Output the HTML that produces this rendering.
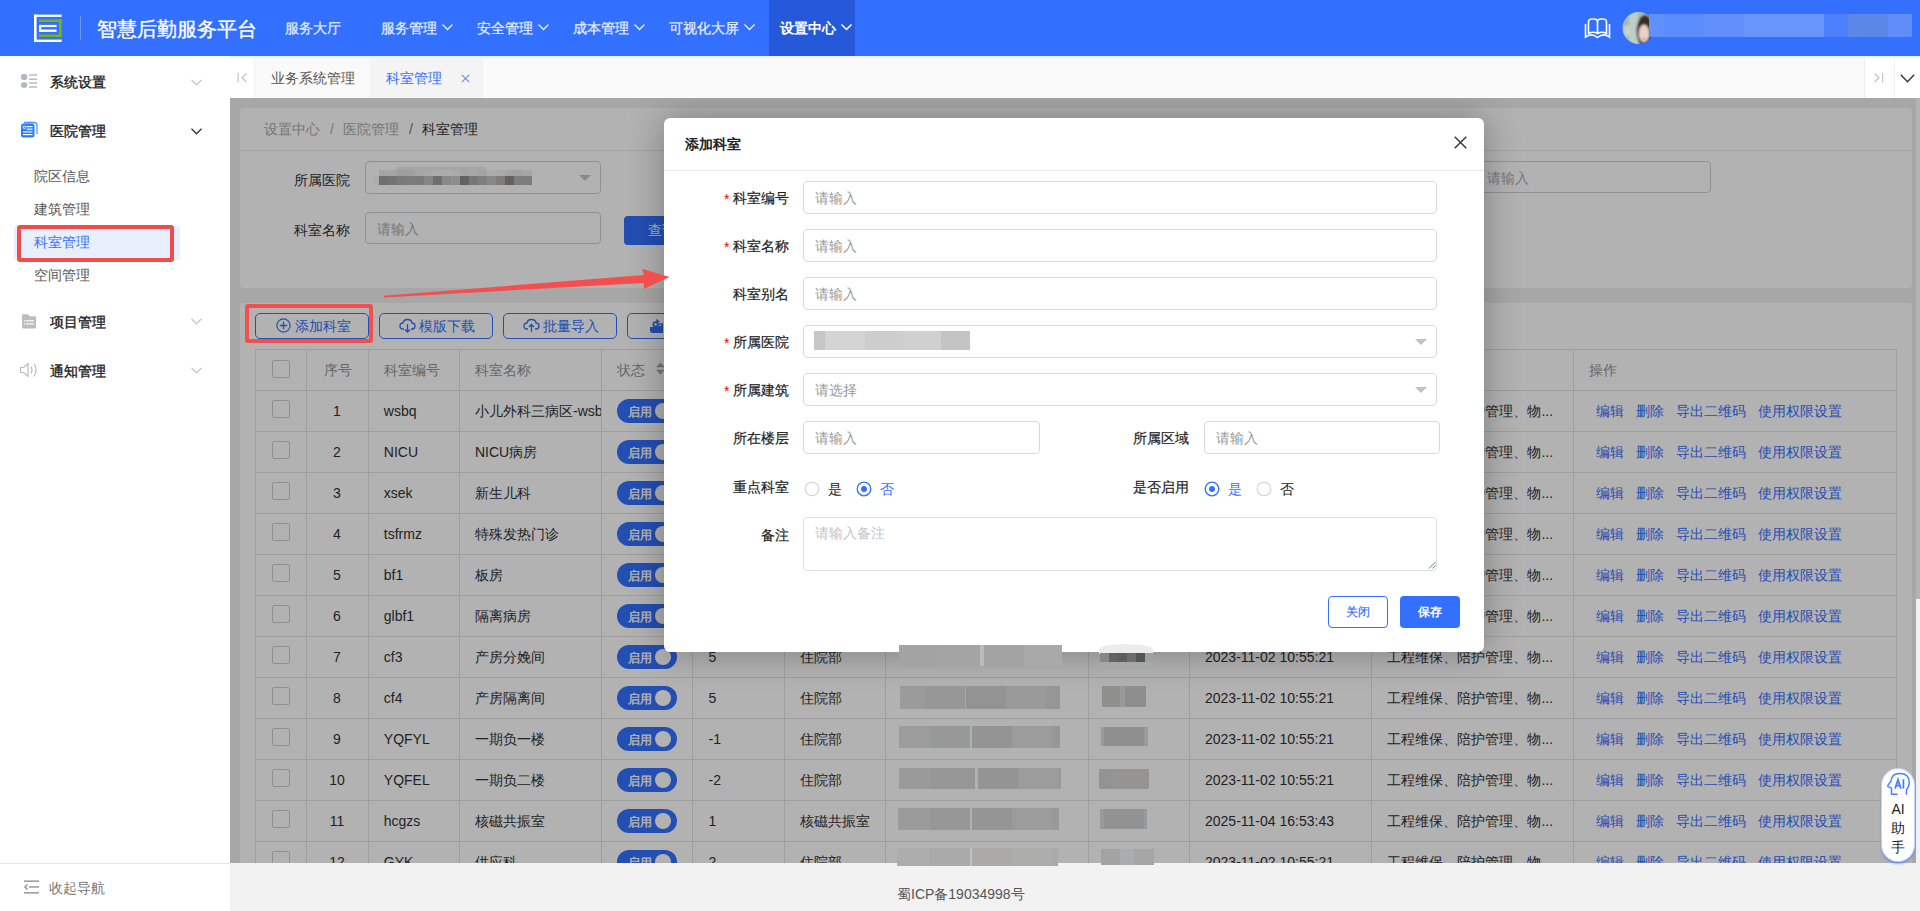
<!DOCTYPE html>
<html><head><meta charset="utf-8">
<style>
*{box-sizing:border-box;margin:0;padding:0}
html,body{width:1920px;height:911px;overflow:hidden;font-family:"Liberation Sans",sans-serif;font-size:14px;color:#333;background:#fff}
.abs{position:absolute}
.t{position:absolute;white-space:nowrap;line-height:1}
/* header */
#hdr{position:absolute;left:0;top:0;width:1920px;height:56px;background:#3370ff;z-index:5}
.nav{position:absolute;top:20px;font-size:14px;font-weight:400;-webkit-text-stroke:0.25px #e6eeff;color:#e6eeff;line-height:16px;white-space:nowrap}
.chev{position:absolute;width:11px;height:7px}
/* sidebar */
#side{position:absolute;left:0;top:56px;width:230px;height:855px;background:#fff}
.mi{position:absolute;left:50px;font-size:14px;font-weight:400;-webkit-text-stroke:0.35px #222;color:#222;line-height:16px}
.si{position:absolute;left:34px;font-size:14px;color:#555;line-height:16px}
/* tabs */
#tabs{position:absolute;left:230px;top:56px;width:1690px;height:42px;background:#fafafa;border-top:2px solid #f0f0f0;z-index:5}
/* content */
#content{position:absolute;left:230px;top:98px;width:1690px;height:765px;background:#f0f0f0;overflow:hidden}
#footer{position:absolute;left:230px;top:863px;width:1690px;height:48px;background:#f2f2f2}
#overlay{position:absolute;left:230px;top:98px;width:1690px;height:765px;background:rgba(0,0,0,0.3)}
/* modal */
#modal{position:absolute;left:664px;top:118px;width:820px;height:534px;background:#fff;border-radius:6px;box-shadow:0 0 36px rgba(0,0,0,0.3)}
.lbl{position:absolute;font-size:14px;color:#222;line-height:16px;white-space:nowrap;text-align:right}
.req{color:#f33;margin-right:4px}
.inp{position:absolute;height:32px;border:1px solid #d4d4d4;border-radius:4px;background:#fff}
.ph{position:absolute;left:11px;top:8px;font-size:14px;line-height:16px;color:#999;white-space:nowrap}
.tri{position:absolute;width:0;height:0;border-left:6px solid transparent;border-right:6px solid transparent;border-top:6px solid #c0c0c0}
</style></head><body>

<!-- HEADER -->
<div id="hdr">
  <svg class="abs" style="left:0;top:0" width="90" height="56">
    <rect x="34" y="14.6" width="27.6" height="2.3" fill="#fff"/>
    <rect x="34" y="14.6" width="2.6" height="27.4" fill="#fff"/>
    <rect x="34" y="39.6" width="27.6" height="2.4" fill="#fff"/>
    <rect x="39" y="19.4" width="22.6" height="2.6" fill="#7ab800"/>
    <rect x="59" y="19.4" width="2.6" height="17.6" fill="#7ab800"/>
    <rect x="39" y="34.6" width="22.6" height="2.4" fill="#7ab800"/>
    <rect x="39" y="24.9" width="17.6" height="2.2" fill="#fff"/>
    <rect x="39" y="29.5" width="17.6" height="2.4" fill="#fff"/>
    <rect x="39" y="24.9" width="2.2" height="7" fill="#fff"/>
    <rect x="80" y="16" width="1" height="24" fill="rgba(255,255,255,0.3)"/>
  </svg>
  <div class="t" style="left:97px;top:18px;font-size:20px;line-height:22px;color:#fff;-webkit-text-stroke:0.35px #fff">智慧后勤服务平台</div>
  <div class="nav" style="left:285px">服务大厅</div>
  <div class="nav" style="left:381px">服务管理</div>
  <div class="nav" style="left:477px">安全管理</div>
  <div class="nav" style="left:573px">成本管理</div>
  <div class="nav" style="left:669px">可视化大屏</div>
  <div class="abs" style="left:769px;top:0;width:86px;height:56px;background:#2659d9"></div>
  <div class="nav" style="left:780px;color:#fff;font-weight:bold;-webkit-text-stroke:0">设置中心</div>
  <svg class="chev" style="left:442px;top:24px" viewBox="0 0 11 7"><path d="M0.5 0.5 L5.5 5.5 L10.5 0.5" fill="none" stroke="#e6eeff" stroke-width="1.3"/></svg>
  <svg class="chev" style="left:538px;top:24px" viewBox="0 0 11 7"><path d="M0.5 0.5 L5.5 5.5 L10.5 0.5" fill="none" stroke="#e6eeff" stroke-width="1.3"/></svg>
  <svg class="chev" style="left:634px;top:24px" viewBox="0 0 11 7"><path d="M0.5 0.5 L5.5 5.5 L10.5 0.5" fill="none" stroke="#e6eeff" stroke-width="1.3"/></svg>
  <svg class="chev" style="left:744px;top:24px" viewBox="0 0 11 7"><path d="M0.5 0.5 L5.5 5.5 L10.5 0.5" fill="none" stroke="#e6eeff" stroke-width="1.3"/></svg>
  <svg class="chev" style="left:841px;top:24px" viewBox="0 0 11 7"><path d="M0.5 0.5 L5.5 5.5 L10.5 0.5" fill="none" stroke="#fff" stroke-width="1.5"/></svg>
  <!-- book icon -->
  <svg class="abs" style="left:1584px;top:18px" width="27" height="21" viewBox="0 0 27 21">
    <path d="M4.5 16 V4 Q4.5 1 8 1 H10 Q13.5 1 13.5 4 V16 M13.5 4 Q13.5 1 17 1 H19 Q22.5 1 22.5 4 V16 M4.5 15.5 Q9 13 13.5 15.5 Q18 13 22.5 15.5" fill="none" stroke="#fff" stroke-width="1.6"/>
    <path d="M1.5 6 V19 Q7.5 14.5 13.5 19.5 Q19.5 14.5 25.5 19 V6" fill="none" stroke="#fff" stroke-width="1.6"/>
  </svg>
  <!-- avatar -->
  <svg class="abs" style="left:1622px;top:12px" width="32" height="32" viewBox="0 0 32 32">
    <defs><clipPath id="av"><circle cx="16.5" cy="16" r="16"/></clipPath><filter id="bl"><feGaussianBlur stdDeviation="0.8"/></filter></defs>
    <g clip-path="url(#av)"><g filter="url(#bl)">
      <rect x="-2" y="-2" width="36" height="36" fill="#a3b9b1"/>
      <rect x="7" y="-2" width="9" height="36" fill="#bfcec8"/>
      <rect x="2" y="14" width="6" height="10" fill="#c8d4c8"/>
      <ellipse cx="23" cy="19" rx="8.5" ry="16" fill="#3e2c22"/>
      <ellipse cx="22" cy="21.5" rx="5.3" ry="9" fill="#e9d3c5"/>
      <ellipse cx="22" cy="27" rx="2" ry="1" fill="#d08a80"/>
    </g></g>
  </svg>
  <div class="abs" style="left:1649px;top:14px;width:263px;height:23px;background:linear-gradient(90deg,#6090fc 0,#6090fc 15px,#5b8cfb 15px,#5b8cfb 55px,#6290fb 55px,#6290fb 95px,#6795fa 95px,#6895fb 175px,#4d80fc 175px,#4d80fc 199px,#5b88e8 199px,#5b88e8 239px,#5f8ef8 239px)"></div>
</div>

<!-- SIDEBAR -->
<div id="side">
  <svg class="abs" style="left:20px;top:18px" width="18" height="16" viewBox="0 0 18 16">
    <rect x="1" y="0" width="6.2" height="6" rx="2" fill="#b4b8c6"/>
    <rect x="1" y="8.2" width="6.2" height="5.6" rx="2" fill="#b4b8c6"/>
    <rect x="9" y="0.3" width="8" height="1.4" fill="#b4b8c6"/>
    <rect x="9" y="4.5" width="8" height="1.4" fill="#b4b8c6"/>
    <rect x="9" y="8.3" width="8" height="1.4" fill="#b4b8c6"/>
    <rect x="9" y="12.3" width="8" height="1.4" fill="#b4b8c6"/>
  </svg>
  <div class="mi" style="top:18px">系统设置</div>
  <svg class="abs" style="left:191px;top:23px" width="11" height="7" viewBox="0 0 11 7"><path d="M0.5 0.8 L5.5 5.8 L10.5 0.8" fill="none" stroke="#bbb" stroke-width="1.1"/></svg>

  <svg class="abs" style="left:20px;top:65px" width="18" height="18" viewBox="0 0 18 18">
    <path d="M4 1.5 H14 Q17 1.5 17 4.5 V13" fill="none" stroke="#4d94ff" stroke-width="1.3"/>
    <rect x="1" y="2.5" width="13.5" height="14" rx="2.5" fill="#2a7cf8"/>
    <circle cx="4.3" cy="6.2" r="1.3" fill="none" stroke="#fff" stroke-width="0.9"/>
    <rect x="6.5" y="5" width="6" height="1.2" fill="#fff"/>
    <rect x="6.5" y="7.6" width="6" height="1.2" fill="#fff"/>
    <rect x="3" y="10.3" width="9.5" height="1.2" fill="#fff"/>
    <rect x="3" y="13" width="9.5" height="1.2" fill="#fff"/>
  </svg>
  <div class="mi" style="top:67px">医院管理</div>
  <svg class="abs" style="left:191px;top:72px" width="11" height="7" viewBox="0 0 11 7"><path d="M0.5 0.8 L5.5 5.8 L10.5 0.8" fill="none" stroke="#333" stroke-width="1.3"/></svg>

  <div class="si" style="top:112px">院区信息</div>
  <div class="si" style="top:145px">建筑管理</div>
  <div class="abs" style="left:14px;top:170px;width:166px;height:34px;background:#e8f0fe;border-radius:3px"></div>
  <div class="si" style="top:178px;color:#3370ff">科室管理</div>
  <div class="si" style="top:211px">空间管理</div>

  <svg class="abs" style="left:21px;top:258px" width="16" height="15" viewBox="0 0 16 15">
    <path d="M1 1.2 Q1 0.2 2 0.2 H7 L8.5 2.2 H14 Q15 2.2 15 3.2 V13.5 Q15 14.5 14 14.5 H2 Q1 14.5 1 13.5 Z" fill="#bdbdbd"/>
    <rect x="3" y="6.2" width="1.2" height="1.2" fill="#fff"/>
    <rect x="5" y="6.2" width="8" height="1.2" fill="#fff"/>
    <rect x="3" y="9.3" width="1.2" height="1.2" fill="#fff"/>
    <rect x="5" y="9.3" width="8" height="1.2" fill="#fff"/>
  </svg>
  <div class="mi" style="top:258px">项目管理</div>
  <svg class="abs" style="left:191px;top:262px" width="11" height="7" viewBox="0 0 11 7"><path d="M0.5 0.8 L5.5 5.8 L10.5 0.8" fill="none" stroke="#bbb" stroke-width="1.1"/></svg>

  <svg class="abs" style="left:19px;top:306px" width="20" height="16" viewBox="0 0 20 16">
    <path d="M1.5 5.5 H4.5 L9 1.5 V14.5 L4.5 10.5 H1.5 Z" fill="none" stroke="#bdbdbd" stroke-width="1.2" stroke-linejoin="round"/>
    <path d="M12 4.5 Q14 8 12 11.5" fill="none" stroke="#bdbdbd" stroke-width="1.2"/>
    <path d="M15 1.5 Q19 8 15 14.5" fill="none" stroke="#bdbdbd" stroke-width="1.2"/>
  </svg>
  <div class="mi" style="top:307px">通知管理</div>
  <svg class="abs" style="left:191px;top:311px" width="11" height="7" viewBox="0 0 11 7"><path d="M0.5 0.8 L5.5 5.8 L10.5 0.8" fill="none" stroke="#bbb" stroke-width="1.1"/></svg>

  <div class="abs" style="left:0;top:807px;width:230px;height:1px;background:#e4e4e4"></div>
  <svg class="abs" style="left:24px;top:824px" width="15" height="14" viewBox="0 0 15 14">
    <rect x="0" y="0.5" width="15" height="1.3" fill="#888"/>
    <rect x="5" y="6.3" width="10" height="1.3" fill="#888"/>
    <rect x="0" y="12.2" width="15" height="1.3" fill="#888"/>
    <path d="M3.5 4.5 L0.8 7 L3.5 9.5" fill="none" stroke="#888" stroke-width="1.2"/>
  </svg>
  <div class="si" style="left:49px;top:824px;color:#777">收起导航</div>
</div>

<!-- TABS -->
<div id="tabs">
  <div class="abs" style="left:0;top:0;width:25px;height:40px;background:#fff;border-right:1px solid #f0f0f0"></div>
  <svg class="abs" style="left:7px;top:15px" width="11" height="10" viewBox="0 0 11 10"><rect x="0.5" y="0" width="1.2" height="9.5" fill="#c4c4c4"/><path d="M9.5 0.5 L5 4.75 L9.5 9" fill="none" stroke="#c4c4c4" stroke-width="1.2"/></svg>
  <div class="t" style="left:41px;top:12px;font-size:14px;color:#555;line-height:16px">业务系统管理</div>
  <div class="abs" style="left:140px;top:0;width:113px;height:40px;background:#f4f4f4"></div>
  <div class="t" style="left:156px;top:12px;font-size:14px;color:#3370ff;line-height:16px">科室管理</div>
  <svg class="abs" style="left:231px;top:15.5px" width="9" height="9" viewBox="0 0 9 9"><path d="M0.8 0.8 L8.2 8.2 M8.2 0.8 L0.8 8.2" fill="none" stroke="#5b8dff" stroke-width="1.1"/></svg>
  <div class="abs" style="left:1634px;top:0;width:56px;height:40px;background:#fff"></div>
  <div class="abs" style="left:1634px;top:0;width:1px;height:40px;background:#f0f0f0"></div>
  <div class="abs" style="left:1664px;top:0;width:1px;height:40px;background:#f0f0f0"></div>
  <svg class="abs" style="left:1643px;top:15px" width="11" height="10" viewBox="0 0 11 10"><rect x="9" y="0" width="1.2" height="9.5" fill="#c4c4c4"/><path d="M1.5 0.5 L6 4.75 L1.5 9" fill="none" stroke="#c4c4c4" stroke-width="1.2"/></svg>
  <svg class="abs" style="left:1670px;top:16px" width="15" height="9" viewBox="0 0 15 9"><path d="M0.8 0.8 L7.5 7.8 L14.2 0.8" fill="none" stroke="#333" stroke-width="1.4"/></svg>
</div>

<!-- CONTENT -->
<div id="content">
<div class="abs" style="left:10px;top:10px;width:1672px;height:180px;background:#fff;border-radius:4px"></div>
<div class="abs" style="left:10px;top:52px;width:1672px;height:1px;background:#ebebeb"></div>
<div class="t" style="left:34px;top:23px;font-size:14px;color:#aaa;line-height:16px">设置中心<span style="margin:0 9px 0 10px">/</span>医院管理<span style="margin:0 9px 0 10px;color:#777">/</span><span style="color:#303133">科室管理</span></div>
<div class="t" style="left:64px;top:74px;font-size:14px;color:#303133;line-height:16px">所属医院</div>
<div class="abs" style="left:135px;top:63px;width:236px;height:33px;border:1px solid #ccd1d6;border-radius:4px;background:#fff"></div>
<div class="tri" style="left:349px;top:77px;border-top-color:#c0c4cc"></div>
<div class="t" style="left:64px;top:124px;font-size:14px;color:#303133;line-height:16px">科室名称</div>
<div class="abs" style="left:135px;top:114px;width:236px;height:32px;border:1px solid #ccd1d6;border-radius:4px;background:#fff"></div>
<div class="t" style="left:147px;top:123px;font-size:14px;color:#a8abb2;line-height:16px">请输入</div>
<div class="abs" style="left:394px;top:118px;width:64px;height:29px;border-radius:4px;background:#3370ff"></div>
<div class="t" style="left:418px;top:124px;font-size:14px;color:#fff;line-height:16px">查询</div>
<div class="abs" style="left:1245px;top:63px;width:236px;height:32px;border:1px solid #ccd1d6;border-radius:4px;background:#fff"></div>
<div class="t" style="left:1257px;top:72px;font-size:14px;color:#a8abb2;line-height:16px">请输入</div>
<div class="abs" style="left:10px;top:205px;width:1672px;height:600px;background:#fff;border-radius:4px"></div>
<div class="abs" style="left:25px;top:215px;width:114px;height:26px;border:1px solid #3370ff;border-radius:5px;background:#fff"></div>
<div class="t" style="left:65px;top:220px;font-size:14px;color:#3370ff;line-height:16px">添加科室</div>
<div class="abs" style="left:149px;top:215px;width:114px;height:26px;border:1px solid #3370ff;border-radius:5px;background:#fff"></div>
<div class="t" style="left:189px;top:220px;font-size:14px;color:#3370ff;line-height:16px">模版下载</div>
<div class="abs" style="left:273px;top:215px;width:114px;height:26px;border:1px solid #3370ff;border-radius:5px;background:#fff"></div>
<div class="t" style="left:313px;top:220px;font-size:14px;color:#3370ff;line-height:16px">批量导入</div>
<div class="abs" style="left:397px;top:215px;width:114px;height:26px;border:1px solid #3370ff;border-radius:5px;background:#fff"></div>
<div class="t" style="left:437px;top:220px;font-size:14px;color:#3370ff;line-height:16px">批量导出</div>
<svg class="abs" style="left:46px;top:220px" width="15" height="15" viewBox="0 0 15 15"><circle cx="7.5" cy="7.5" r="6.6" fill="none" stroke="#3370ff" stroke-width="1.2"/><path d="M7.5 3.8 V11.2 M3.8 7.5 H11.2" stroke="#3370ff" stroke-width="1.3"/></svg>
<svg class="abs" style="left:169px;top:220px" width="17" height="15" viewBox="0 0 17 15"><path d="M5 11 H4 Q1 11 1 8 Q1 5 4 5 Q4.5 1.5 8.5 1.5 Q12.5 1.5 13 5 Q16 5 16 8 Q16 11 13 11 H12" fill="none" stroke="#3370ff" stroke-width="1.3"/><path d="M8.5 6 V14 M6 11.5 L8.5 14 L11 11.5" fill="none" stroke="#3370ff" stroke-width="1.3"/></svg>
<svg class="abs" style="left:293px;top:220px" width="17" height="15" viewBox="0 0 17 15"><path d="M5 11 H4 Q1 11 1 8 Q1 5 4 5 Q4.5 1.5 8.5 1.5 Q12.5 1.5 13 5 Q16 5 16 8 Q16 11 13 11 H12" fill="none" stroke="#3370ff" stroke-width="1.3"/><path d="M8.5 14 V6.5 M6 9 L8.5 6.5 L11 9" fill="none" stroke="#3370ff" stroke-width="1.3"/></svg>
<svg class="abs" style="left:418px;top:220px" width="16" height="16" viewBox="0 0 16 16"><path d="M2 9 H15 V15 H4 Q2.5 15 2 13 Z" fill="#3370ff"/><circle cx="7.6" cy="6.4" r="2.2" fill="none" stroke="#3370ff" stroke-width="1.8"/><path d="M10.5 5.2 H15 V9.5 H10.5 Z" fill="#3370ff"/><rect x="11.5" y="6.3" width="1.6" height="1.6" fill="#fff"/><path d="M8.3 0.8 L11.8 3.6 L8.3 5.2 Z" fill="#3370ff"/></svg>
<div class="abs" style="left:25px;top:251px;width:1642px;height:533px;border:1px solid #e3e3e3;border-bottom:none"></div>
<div class="abs" style="left:76px;top:251px;width:1px;height:533px;background:#e3e3e3"></div>
<div class="abs" style="left:138px;top:251px;width:1px;height:533px;background:#e3e3e3"></div>
<div class="abs" style="left:229px;top:251px;width:1px;height:533px;background:#e3e3e3"></div>
<div class="abs" style="left:371px;top:251px;width:1px;height:533px;background:#e3e3e3"></div>
<div class="abs" style="left:462px;top:251px;width:1px;height:533px;background:#e3e3e3"></div>
<div class="abs" style="left:554px;top:251px;width:1px;height:533px;background:#e3e3e3"></div>
<div class="abs" style="left:655px;top:251px;width:1px;height:533px;background:#e3e3e3"></div>
<div class="abs" style="left:858px;top:251px;width:1px;height:533px;background:#e3e3e3"></div>
<div class="abs" style="left:959px;top:251px;width:1px;height:533px;background:#e3e3e3"></div>
<div class="abs" style="left:1141px;top:251px;width:1px;height:533px;background:#e3e3e3"></div>
<div class="abs" style="left:1343px;top:251px;width:1px;height:533px;background:#e3e3e3"></div>
<div class="abs" style="left:25px;top:292px;width:1641px;height:1px;background:#e3e3e3"></div>
<div class="abs" style="left:25px;top:333px;width:1641px;height:1px;background:#e3e3e3"></div>
<div class="abs" style="left:25px;top:374px;width:1641px;height:1px;background:#e3e3e3"></div>
<div class="abs" style="left:25px;top:415px;width:1641px;height:1px;background:#e3e3e3"></div>
<div class="abs" style="left:25px;top:456px;width:1641px;height:1px;background:#e3e3e3"></div>
<div class="abs" style="left:25px;top:497px;width:1641px;height:1px;background:#e3e3e3"></div>
<div class="abs" style="left:25px;top:538px;width:1641px;height:1px;background:#e3e3e3"></div>
<div class="abs" style="left:25px;top:579px;width:1641px;height:1px;background:#e3e3e3"></div>
<div class="abs" style="left:25px;top:620px;width:1641px;height:1px;background:#e3e3e3"></div>
<div class="abs" style="left:25px;top:661px;width:1641px;height:1px;background:#e3e3e3"></div>
<div class="abs" style="left:25px;top:702px;width:1641px;height:1px;background:#e3e3e3"></div>
<div class="abs" style="left:25px;top:743px;width:1641px;height:1px;background:#e3e3e3"></div>
<div class="abs" style="left:25px;top:784px;width:1641px;height:1px;background:#e3e3e3"></div>
<div class="abs" style="left:42px;top:262px;width:18px;height:18px;border:1px solid #cdcdcd;border-radius:2px;background:#fff"></div>
<div class="t" style="left:93.5px;top:264px;font-size:14px;color:#909399;line-height:16px">序号</div>
<div class="t" style="left:153.8px;top:264px;font-size:14px;color:#909399;line-height:16px">科室编号</div>
<div class="t" style="left:245.0px;top:264px;font-size:14px;color:#909399;line-height:16px">科室名称</div>
<div class="t" style="left:387.4px;top:264px;font-size:14px;color:#909399;line-height:16px">状态</div>
<div class="t" style="left:1359.0px;top:264px;font-size:14px;color:#909399;line-height:16px">操作</div>
<svg class="abs" style="left:425px;top:264px" width="11" height="13" viewBox="0 0 11 13"><path d="M1 5.3 L5.5 0.5 L10 5.3 Z M1 7.7 L5.5 12.5 L10 7.7 Z" fill="#a8abb2"/></svg>
<div class="abs" style="left:42px;top:302px;width:18px;height:18px;border:1px solid #cdcdcd;border-radius:2px;background:#fff"></div>
<div class="t" style="left:76px;top:304.5px;width:62px;text-align:center;font-size:14px;color:#303133;line-height:16px">1</div>
<div class="t" style="left:153.8px;top:304.5px;font-size:14px;color:#303133;line-height:16px">wsbq</div>
<div class="t" style="left:245.0px;top:304.5px;width:126px;overflow:hidden;font-size:14px;color:#303133;line-height:16px">小儿外科三病区-wsbq</div>
<div class="abs" style="left:387.0px;top:300.5px;width:60px;height:24px;border-radius:12px;background:#3370ff"></div>
<div class="abs" style="left:425.0px;top:304.5px;width:16px;height:16px;border-radius:50%;background:#fff"></div>
<div class="t" style="left:398.0px;top:306.5px;font-size:12px;color:#fff;font-weight:bold;line-height:14px">启用</div>
<div class="t" style="left:975.0px;top:304.5px;font-size:14px;color:#303133;line-height:16px">2023-11-02 10:55:21</div>
<div class="t" style="left:1157.4px;top:304.5px;font-size:14px;color:#303133;line-height:16px">工程维保、陪护管理、物...</div>
<div class="t" style="left:1365.5px;top:304.5px;font-size:14px;color:#3370ff;line-height:16px"><span style="margin-right:12px">编辑</span><span style="margin-right:12px">删除</span><span style="margin-right:12px">导出二维码</span>使用权限设置</div>
<div class="abs" style="left:42px;top:343px;width:18px;height:18px;border:1px solid #cdcdcd;border-radius:2px;background:#fff"></div>
<div class="t" style="left:76px;top:345.5px;width:62px;text-align:center;font-size:14px;color:#303133;line-height:16px">2</div>
<div class="t" style="left:153.8px;top:345.5px;font-size:14px;color:#303133;line-height:16px">NICU</div>
<div class="t" style="left:245.0px;top:345.5px;width:126px;overflow:hidden;font-size:14px;color:#303133;line-height:16px">NICU病房</div>
<div class="abs" style="left:387.0px;top:341.5px;width:60px;height:24px;border-radius:12px;background:#3370ff"></div>
<div class="abs" style="left:425.0px;top:345.5px;width:16px;height:16px;border-radius:50%;background:#fff"></div>
<div class="t" style="left:398.0px;top:347.5px;font-size:12px;color:#fff;font-weight:bold;line-height:14px">启用</div>
<div class="t" style="left:975.0px;top:345.5px;font-size:14px;color:#303133;line-height:16px">2023-11-02 10:55:21</div>
<div class="t" style="left:1157.4px;top:345.5px;font-size:14px;color:#303133;line-height:16px">工程维保、陪护管理、物...</div>
<div class="t" style="left:1365.5px;top:345.5px;font-size:14px;color:#3370ff;line-height:16px"><span style="margin-right:12px">编辑</span><span style="margin-right:12px">删除</span><span style="margin-right:12px">导出二维码</span>使用权限设置</div>
<div class="abs" style="left:42px;top:384px;width:18px;height:18px;border:1px solid #cdcdcd;border-radius:2px;background:#fff"></div>
<div class="t" style="left:76px;top:386.5px;width:62px;text-align:center;font-size:14px;color:#303133;line-height:16px">3</div>
<div class="t" style="left:153.8px;top:386.5px;font-size:14px;color:#303133;line-height:16px">xsek</div>
<div class="t" style="left:245.0px;top:386.5px;width:126px;overflow:hidden;font-size:14px;color:#303133;line-height:16px">新生儿科</div>
<div class="abs" style="left:387.0px;top:382.5px;width:60px;height:24px;border-radius:12px;background:#3370ff"></div>
<div class="abs" style="left:425.0px;top:386.5px;width:16px;height:16px;border-radius:50%;background:#fff"></div>
<div class="t" style="left:398.0px;top:388.5px;font-size:12px;color:#fff;font-weight:bold;line-height:14px">启用</div>
<div class="t" style="left:975.0px;top:386.5px;font-size:14px;color:#303133;line-height:16px">2023-11-02 10:55:21</div>
<div class="t" style="left:1157.4px;top:386.5px;font-size:14px;color:#303133;line-height:16px">工程维保、陪护管理、物...</div>
<div class="t" style="left:1365.5px;top:386.5px;font-size:14px;color:#3370ff;line-height:16px"><span style="margin-right:12px">编辑</span><span style="margin-right:12px">删除</span><span style="margin-right:12px">导出二维码</span>使用权限设置</div>
<div class="abs" style="left:42px;top:425px;width:18px;height:18px;border:1px solid #cdcdcd;border-radius:2px;background:#fff"></div>
<div class="t" style="left:76px;top:427.5px;width:62px;text-align:center;font-size:14px;color:#303133;line-height:16px">4</div>
<div class="t" style="left:153.8px;top:427.5px;font-size:14px;color:#303133;line-height:16px">tsfrmz</div>
<div class="t" style="left:245.0px;top:427.5px;width:126px;overflow:hidden;font-size:14px;color:#303133;line-height:16px">特殊发热门诊</div>
<div class="abs" style="left:387.0px;top:423.5px;width:60px;height:24px;border-radius:12px;background:#3370ff"></div>
<div class="abs" style="left:425.0px;top:427.5px;width:16px;height:16px;border-radius:50%;background:#fff"></div>
<div class="t" style="left:398.0px;top:429.5px;font-size:12px;color:#fff;font-weight:bold;line-height:14px">启用</div>
<div class="t" style="left:975.0px;top:427.5px;font-size:14px;color:#303133;line-height:16px">2023-11-02 10:55:21</div>
<div class="t" style="left:1157.4px;top:427.5px;font-size:14px;color:#303133;line-height:16px">工程维保、陪护管理、物...</div>
<div class="t" style="left:1365.5px;top:427.5px;font-size:14px;color:#3370ff;line-height:16px"><span style="margin-right:12px">编辑</span><span style="margin-right:12px">删除</span><span style="margin-right:12px">导出二维码</span>使用权限设置</div>
<div class="abs" style="left:42px;top:466px;width:18px;height:18px;border:1px solid #cdcdcd;border-radius:2px;background:#fff"></div>
<div class="t" style="left:76px;top:468.5px;width:62px;text-align:center;font-size:14px;color:#303133;line-height:16px">5</div>
<div class="t" style="left:153.8px;top:468.5px;font-size:14px;color:#303133;line-height:16px">bf1</div>
<div class="t" style="left:245.0px;top:468.5px;width:126px;overflow:hidden;font-size:14px;color:#303133;line-height:16px">板房</div>
<div class="abs" style="left:387.0px;top:464.5px;width:60px;height:24px;border-radius:12px;background:#3370ff"></div>
<div class="abs" style="left:425.0px;top:468.5px;width:16px;height:16px;border-radius:50%;background:#fff"></div>
<div class="t" style="left:398.0px;top:470.5px;font-size:12px;color:#fff;font-weight:bold;line-height:14px">启用</div>
<div class="t" style="left:975.0px;top:468.5px;font-size:14px;color:#303133;line-height:16px">2023-11-02 10:55:21</div>
<div class="t" style="left:1157.4px;top:468.5px;font-size:14px;color:#303133;line-height:16px">工程维保、陪护管理、物...</div>
<div class="t" style="left:1365.5px;top:468.5px;font-size:14px;color:#3370ff;line-height:16px"><span style="margin-right:12px">编辑</span><span style="margin-right:12px">删除</span><span style="margin-right:12px">导出二维码</span>使用权限设置</div>
<div class="abs" style="left:42px;top:507px;width:18px;height:18px;border:1px solid #cdcdcd;border-radius:2px;background:#fff"></div>
<div class="t" style="left:76px;top:509.5px;width:62px;text-align:center;font-size:14px;color:#303133;line-height:16px">6</div>
<div class="t" style="left:153.8px;top:509.5px;font-size:14px;color:#303133;line-height:16px">glbf1</div>
<div class="t" style="left:245.0px;top:509.5px;width:126px;overflow:hidden;font-size:14px;color:#303133;line-height:16px">隔离病房</div>
<div class="abs" style="left:387.0px;top:505.5px;width:60px;height:24px;border-radius:12px;background:#3370ff"></div>
<div class="abs" style="left:425.0px;top:509.5px;width:16px;height:16px;border-radius:50%;background:#fff"></div>
<div class="t" style="left:398.0px;top:511.5px;font-size:12px;color:#fff;font-weight:bold;line-height:14px">启用</div>
<div class="t" style="left:975.0px;top:509.5px;font-size:14px;color:#303133;line-height:16px">2023-11-02 10:55:21</div>
<div class="t" style="left:1157.4px;top:509.5px;font-size:14px;color:#303133;line-height:16px">工程维保、陪护管理、物...</div>
<div class="t" style="left:1365.5px;top:509.5px;font-size:14px;color:#3370ff;line-height:16px"><span style="margin-right:12px">编辑</span><span style="margin-right:12px">删除</span><span style="margin-right:12px">导出二维码</span>使用权限设置</div>
<div class="abs" style="left:42px;top:548px;width:18px;height:18px;border:1px solid #cdcdcd;border-radius:2px;background:#fff"></div>
<div class="t" style="left:76px;top:550.5px;width:62px;text-align:center;font-size:14px;color:#303133;line-height:16px">7</div>
<div class="t" style="left:153.8px;top:550.5px;font-size:14px;color:#303133;line-height:16px">cf3</div>
<div class="t" style="left:245.0px;top:550.5px;width:126px;overflow:hidden;font-size:14px;color:#303133;line-height:16px">产房分娩间</div>
<div class="abs" style="left:387.0px;top:546.5px;width:60px;height:24px;border-radius:12px;background:#3370ff"></div>
<div class="abs" style="left:425.0px;top:550.5px;width:16px;height:16px;border-radius:50%;background:#fff"></div>
<div class="t" style="left:398.0px;top:552.5px;font-size:12px;color:#fff;font-weight:bold;line-height:14px">启用</div>
<div class="t" style="left:478.5px;top:550.5px;font-size:14px;color:#303133;line-height:16px">5</div>
<div class="t" style="left:570.4px;top:550.5px;font-size:14px;color:#303133;line-height:16px">住院部</div>
<div class="t" style="left:975.0px;top:550.5px;font-size:14px;color:#303133;line-height:16px">2023-11-02 10:55:21</div>
<div class="t" style="left:1157.4px;top:550.5px;font-size:14px;color:#303133;line-height:16px">工程维保、陪护管理、物...</div>
<div class="t" style="left:1365.5px;top:550.5px;font-size:14px;color:#3370ff;line-height:16px"><span style="margin-right:12px">编辑</span><span style="margin-right:12px">删除</span><span style="margin-right:12px">导出二维码</span>使用权限设置</div>
<div class="abs" style="left:42px;top:589px;width:18px;height:18px;border:1px solid #cdcdcd;border-radius:2px;background:#fff"></div>
<div class="t" style="left:76px;top:591.5px;width:62px;text-align:center;font-size:14px;color:#303133;line-height:16px">8</div>
<div class="t" style="left:153.8px;top:591.5px;font-size:14px;color:#303133;line-height:16px">cf4</div>
<div class="t" style="left:245.0px;top:591.5px;width:126px;overflow:hidden;font-size:14px;color:#303133;line-height:16px">产房隔离间</div>
<div class="abs" style="left:387.0px;top:587.5px;width:60px;height:24px;border-radius:12px;background:#3370ff"></div>
<div class="abs" style="left:425.0px;top:591.5px;width:16px;height:16px;border-radius:50%;background:#fff"></div>
<div class="t" style="left:398.0px;top:593.5px;font-size:12px;color:#fff;font-weight:bold;line-height:14px">启用</div>
<div class="t" style="left:478.5px;top:591.5px;font-size:14px;color:#303133;line-height:16px">5</div>
<div class="t" style="left:570.4px;top:591.5px;font-size:14px;color:#303133;line-height:16px">住院部</div>
<div class="t" style="left:975.0px;top:591.5px;font-size:14px;color:#303133;line-height:16px">2023-11-02 10:55:21</div>
<div class="t" style="left:1157.4px;top:591.5px;font-size:14px;color:#303133;line-height:16px">工程维保、陪护管理、物...</div>
<div class="t" style="left:1365.5px;top:591.5px;font-size:14px;color:#3370ff;line-height:16px"><span style="margin-right:12px">编辑</span><span style="margin-right:12px">删除</span><span style="margin-right:12px">导出二维码</span>使用权限设置</div>
<div class="abs" style="left:42px;top:630px;width:18px;height:18px;border:1px solid #cdcdcd;border-radius:2px;background:#fff"></div>
<div class="t" style="left:76px;top:632.5px;width:62px;text-align:center;font-size:14px;color:#303133;line-height:16px">9</div>
<div class="t" style="left:153.8px;top:632.5px;font-size:14px;color:#303133;line-height:16px">YQFYL</div>
<div class="t" style="left:245.0px;top:632.5px;width:126px;overflow:hidden;font-size:14px;color:#303133;line-height:16px">一期负一楼</div>
<div class="abs" style="left:387.0px;top:628.5px;width:60px;height:24px;border-radius:12px;background:#3370ff"></div>
<div class="abs" style="left:425.0px;top:632.5px;width:16px;height:16px;border-radius:50%;background:#fff"></div>
<div class="t" style="left:398.0px;top:634.5px;font-size:12px;color:#fff;font-weight:bold;line-height:14px">启用</div>
<div class="t" style="left:478.5px;top:632.5px;font-size:14px;color:#303133;line-height:16px">-1</div>
<div class="t" style="left:570.4px;top:632.5px;font-size:14px;color:#303133;line-height:16px">住院部</div>
<div class="t" style="left:975.0px;top:632.5px;font-size:14px;color:#303133;line-height:16px">2023-11-02 10:55:21</div>
<div class="t" style="left:1157.4px;top:632.5px;font-size:14px;color:#303133;line-height:16px">工程维保、陪护管理、物...</div>
<div class="t" style="left:1365.5px;top:632.5px;font-size:14px;color:#3370ff;line-height:16px"><span style="margin-right:12px">编辑</span><span style="margin-right:12px">删除</span><span style="margin-right:12px">导出二维码</span>使用权限设置</div>
<div class="abs" style="left:42px;top:671px;width:18px;height:18px;border:1px solid #cdcdcd;border-radius:2px;background:#fff"></div>
<div class="t" style="left:76px;top:673.5px;width:62px;text-align:center;font-size:14px;color:#303133;line-height:16px">10</div>
<div class="t" style="left:153.8px;top:673.5px;font-size:14px;color:#303133;line-height:16px">YQFEL</div>
<div class="t" style="left:245.0px;top:673.5px;width:126px;overflow:hidden;font-size:14px;color:#303133;line-height:16px">一期负二楼</div>
<div class="abs" style="left:387.0px;top:669.5px;width:60px;height:24px;border-radius:12px;background:#3370ff"></div>
<div class="abs" style="left:425.0px;top:673.5px;width:16px;height:16px;border-radius:50%;background:#fff"></div>
<div class="t" style="left:398.0px;top:675.5px;font-size:12px;color:#fff;font-weight:bold;line-height:14px">启用</div>
<div class="t" style="left:478.5px;top:673.5px;font-size:14px;color:#303133;line-height:16px">-2</div>
<div class="t" style="left:570.4px;top:673.5px;font-size:14px;color:#303133;line-height:16px">住院部</div>
<div class="t" style="left:975.0px;top:673.5px;font-size:14px;color:#303133;line-height:16px">2023-11-02 10:55:21</div>
<div class="t" style="left:1157.4px;top:673.5px;font-size:14px;color:#303133;line-height:16px">工程维保、陪护管理、物...</div>
<div class="t" style="left:1365.5px;top:673.5px;font-size:14px;color:#3370ff;line-height:16px"><span style="margin-right:12px">编辑</span><span style="margin-right:12px">删除</span><span style="margin-right:12px">导出二维码</span>使用权限设置</div>
<div class="abs" style="left:42px;top:712px;width:18px;height:18px;border:1px solid #cdcdcd;border-radius:2px;background:#fff"></div>
<div class="t" style="left:76px;top:714.5px;width:62px;text-align:center;font-size:14px;color:#303133;line-height:16px">11</div>
<div class="t" style="left:153.8px;top:714.5px;font-size:14px;color:#303133;line-height:16px">hcgzs</div>
<div class="t" style="left:245.0px;top:714.5px;width:126px;overflow:hidden;font-size:14px;color:#303133;line-height:16px">核磁共振室</div>
<div class="abs" style="left:387.0px;top:710.5px;width:60px;height:24px;border-radius:12px;background:#3370ff"></div>
<div class="abs" style="left:425.0px;top:714.5px;width:16px;height:16px;border-radius:50%;background:#fff"></div>
<div class="t" style="left:398.0px;top:716.5px;font-size:12px;color:#fff;font-weight:bold;line-height:14px">启用</div>
<div class="t" style="left:478.5px;top:714.5px;font-size:14px;color:#303133;line-height:16px">1</div>
<div class="t" style="left:570.4px;top:714.5px;font-size:14px;color:#303133;line-height:16px">核磁共振室</div>
<div class="t" style="left:975.0px;top:714.5px;font-size:14px;color:#303133;line-height:16px">2025-11-04 16:53:43</div>
<div class="t" style="left:1157.4px;top:714.5px;font-size:14px;color:#303133;line-height:16px">工程维保、陪护管理、物...</div>
<div class="t" style="left:1365.5px;top:714.5px;font-size:14px;color:#3370ff;line-height:16px"><span style="margin-right:12px">编辑</span><span style="margin-right:12px">删除</span><span style="margin-right:12px">导出二维码</span>使用权限设置</div>
<div class="abs" style="left:42px;top:753px;width:18px;height:18px;border:1px solid #cdcdcd;border-radius:2px;background:#fff"></div>
<div class="t" style="left:76px;top:755.5px;width:62px;text-align:center;font-size:14px;color:#303133;line-height:16px">12</div>
<div class="t" style="left:153.8px;top:755.5px;font-size:14px;color:#303133;line-height:16px">GYK</div>
<div class="t" style="left:245.0px;top:755.5px;width:126px;overflow:hidden;font-size:14px;color:#303133;line-height:16px">供应科</div>
<div class="abs" style="left:387.0px;top:751.5px;width:60px;height:24px;border-radius:12px;background:#3370ff"></div>
<div class="abs" style="left:425.0px;top:755.5px;width:16px;height:16px;border-radius:50%;background:#fff"></div>
<div class="t" style="left:398.0px;top:757.5px;font-size:12px;color:#fff;font-weight:bold;line-height:14px">启用</div>
<div class="t" style="left:478.5px;top:755.5px;font-size:14px;color:#303133;line-height:16px">2</div>
<div class="t" style="left:570.4px;top:755.5px;font-size:14px;color:#303133;line-height:16px">住院部</div>
<div class="t" style="left:975.0px;top:755.5px;font-size:14px;color:#303133;line-height:16px">2023-11-02 10:55:21</div>
<div class="t" style="left:1157.4px;top:755.5px;font-size:14px;color:#303133;line-height:16px">工程维保、陪护管理、物...</div>
<div class="t" style="left:1365.5px;top:755.5px;font-size:14px;color:#3370ff;line-height:16px"><span style="margin-right:12px">编辑</span><span style="margin-right:12px">删除</span><span style="margin-right:12px">导出二维码</span>使用权限设置</div>
</div>
<div id="footer"><div class="t" style="left:667px;top:24px;font-size:14px;color:#555">蜀ICP备19034998号</div></div>
<div id="overlay"></div>
<div class="abs" style="left:1916px;top:599px;width:4px;height:264px;background:#f2f2f2"></div>
<div class="abs" style="left:1916px;top:98px;width:4px;height:501px;background:#b4b4b4"></div>
<div id="modal">
<div class="t" style="left:21px;top:18px;font-size:14px;font-weight:bold;color:#222;line-height:16px">添加科室</div>
<svg class="abs" style="left:790px;top:18px" width="13" height="13" viewBox="0 0 13 13"><path d="M0.7 0.7 L12.3 12.3 M12.3 0.7 L0.7 12.3" stroke="#333" stroke-width="1.4"/></svg>
<div class="abs" style="left:0;top:52px;width:820px;height:1px;background:#e6e8eb"></div>
<div class="t" style="left:60px;top:72.5px;font-size:14px;color:#f00;line-height:16px">*</div>
<div class="t" style="left:69px;top:71.5px;font-size:14px;color:#222;-webkit-text-stroke:0.2px #222;line-height:16px">科室编号</div>
<div class="abs" style="left:139px;top:63px;width:634px;height:33px;border:1px solid #d9d9d9;border-radius:4px;background:#fff"></div>
<div class="t" style="left:151px;top:71.5px;font-size:14px;color:#999;line-height:16px">请输入</div>
<div class="t" style="left:60px;top:120.5px;font-size:14px;color:#f00;line-height:16px">*</div>
<div class="t" style="left:69px;top:119.5px;font-size:14px;color:#222;-webkit-text-stroke:0.2px #222;line-height:16px">科室名称</div>
<div class="abs" style="left:139px;top:111px;width:634px;height:33px;border:1px solid #d9d9d9;border-radius:4px;background:#fff"></div>
<div class="t" style="left:151px;top:119.5px;font-size:14px;color:#999;line-height:16px">请输入</div>
<div class="t" style="left:69px;top:167.5px;font-size:14px;color:#222;-webkit-text-stroke:0.2px #222;line-height:16px">科室别名</div>
<div class="abs" style="left:139px;top:159px;width:634px;height:33px;border:1px solid #d9d9d9;border-radius:4px;background:#fff"></div>
<div class="t" style="left:151px;top:167.5px;font-size:14px;color:#999;line-height:16px">请输入</div>
<div class="t" style="left:60px;top:216.5px;font-size:14px;color:#f00;line-height:16px">*</div>
<div class="t" style="left:69px;top:215.5px;font-size:14px;color:#222;-webkit-text-stroke:0.2px #222;line-height:16px">所属医院</div>
<div class="abs" style="left:139px;top:207px;width:634px;height:33px;border:1px solid #d9d9d9;border-radius:4px;background:#fff"></div>
<div class="tri" style="left:751px;top:220.5px;border-top-color:#c0c0c0"></div>
<div class="t" style="left:60px;top:264.5px;font-size:14px;color:#f00;line-height:16px">*</div>
<div class="t" style="left:69px;top:263.5px;font-size:14px;color:#222;-webkit-text-stroke:0.2px #222;line-height:16px">所属建筑</div>
<div class="abs" style="left:139px;top:255px;width:634px;height:33px;border:1px solid #d9d9d9;border-radius:4px;background:#fff"></div>
<div class="t" style="left:151px;top:263.5px;font-size:14px;color:#999;line-height:16px">请选择</div>
<div class="tri" style="left:751px;top:268.5px;border-top-color:#c0c0c0"></div>
<div class="t" style="left:69px;top:312px;font-size:14px;color:#222;-webkit-text-stroke:0.2px #222;line-height:16px">所在楼层</div>
<div class="abs" style="left:139px;top:303px;width:237px;height:33px;border:1px solid #d9d9d9;border-radius:4px;background:#fff"></div>
<div class="t" style="left:151px;top:312px;font-size:14px;color:#999;line-height:16px">请输入</div>
<div class="t" style="left:469px;top:312px;font-size:14px;color:#222;-webkit-text-stroke:0.2px #222;line-height:16px">所属区域</div>
<div class="abs" style="left:540px;top:303px;width:236px;height:33px;border:1px solid #d9d9d9;border-radius:4px;background:#fff"></div>
<div class="t" style="left:552px;top:312px;font-size:14px;color:#999;line-height:16px">请输入</div>
<div class="t" style="left:69px;top:361px;font-size:14px;color:#222;-webkit-text-stroke:0.2px #222;line-height:16px">重点科室</div>
<svg class="abs" style="left:140.0px;top:363.0px" width="16" height="16" viewBox="0 0 16 16"><circle cx="8" cy="8" r="6.8" fill="#fff" stroke="#d0d0d0" stroke-width="1.1"/></svg>
<svg class="abs" style="left:192.0px;top:363.0px" width="16" height="16" viewBox="0 0 16 16"><circle cx="8" cy="8" r="6.8" fill="#fff" stroke="#3370ff" stroke-width="1.3"/><circle cx="8" cy="8" r="3" fill="#3370ff"/></svg>
<div class="t" style="left:164px;top:363px;font-size:14px;color:#222;line-height:16px">是</div>
<div class="t" style="left:216px;top:363px;font-size:14px;color:#3370ff;line-height:16px">否</div>
<div class="t" style="left:469px;top:361px;font-size:14px;color:#222;-webkit-text-stroke:0.2px #222;line-height:16px">是否启用</div>
<svg class="abs" style="left:540.0px;top:363.0px" width="16" height="16" viewBox="0 0 16 16"><circle cx="8" cy="8" r="6.8" fill="#fff" stroke="#3370ff" stroke-width="1.3"/><circle cx="8" cy="8" r="3" fill="#3370ff"/></svg>
<svg class="abs" style="left:592.0px;top:363.0px" width="16" height="16" viewBox="0 0 16 16"><circle cx="8" cy="8" r="6.8" fill="#fff" stroke="#d0d0d0" stroke-width="1.1"/></svg>
<div class="t" style="left:564px;top:363px;font-size:14px;color:#3370ff;line-height:16px">是</div>
<div class="t" style="left:616px;top:363px;font-size:14px;color:#222;line-height:16px">否</div>
<div class="t" style="left:97px;top:409px;font-size:14px;color:#222;-webkit-text-stroke:0.2px #222;line-height:16px">备注</div>
<div class="abs" style="left:139px;top:399px;width:634px;height:54px;border:1px solid #dcdfe6;border-radius:4px;background:#fff"></div>
<div class="t" style="left:151px;top:407px;font-size:14px;color:#c0c4cc;line-height:16px">请输入备注</div>
<svg class="abs" style="left:764px;top:443px" width="8" height="8" viewBox="0 0 8 8"><path d="M7.5 1 L1 7.5 M7.5 4.5 L4.5 7.5" stroke="#777" stroke-width="1"/></svg>
<div class="abs" style="left:664px;top:478px;width:60px;height:32px;border:1px solid #3370ff;border-radius:4px;background:#fff"></div>
<div class="t" style="left:682px;top:487px;font-size:12px;color:#3370ff;-webkit-text-stroke:0.2px #3370ff;line-height:14px">关闭</div>
<div class="abs" style="left:736px;top:478px;width:60px;height:32px;border-radius:4px;background:#3370ff"></div>
<div class="t" style="left:754px;top:487px;font-size:12px;font-weight:bold;color:#fff;line-height:14px">保存</div>
</div>
<div class="abs" style="left:814px;top:331px;width:11px;height:19px;background:#c6c6c6"></div><div class="abs" style="left:825px;top:331px;width:40px;height:19px;background:#d4d4d4"></div><div class="abs" style="left:865px;top:331px;width:38px;height:19px;background:#cdcdcd"></div><div class="abs" style="left:903px;top:331px;width:38px;height:19px;background:#d0d0d0"></div><div class="abs" style="left:941px;top:331px;width:29px;height:19px;background:#c4c4c4"></div>
<div class="abs" style="left:374px;top:176px;width:6px;height:9px;background:#b0aca8;border-radius:3px 0 0 3px"></div>
<div class="abs" style="left:396px;top:167px;width:90px;height:3px;background:#a4a5a6;border-radius:3px 3px 0 0"></div>
<div class="abs" style="left:379px;top:170px;width:9px;height:6px;background:#a4a4a4"></div><div class="abs" style="left:388px;top:170px;width:9px;height:6px;background:#a5a5a5"></div><div class="abs" style="left:397px;top:170px;width:9px;height:6px;background:#9c9d9f"></div><div class="abs" style="left:406px;top:170px;width:9px;height:6px;background:#9f9f9f"></div><div class="abs" style="left:415px;top:170px;width:9px;height:6px;background:#a6a6a6"></div><div class="abs" style="left:424px;top:170px;width:9px;height:6px;background:#a8a8a8"></div><div class="abs" style="left:433px;top:170px;width:9px;height:6px;background:#acacac"></div><div class="abs" style="left:442px;top:170px;width:9px;height:6px;background:#adacaa"></div><div class="abs" style="left:451px;top:170px;width:9px;height:6px;background:#a9aaac"></div><div class="abs" style="left:460px;top:170px;width:9px;height:6px;background:#a6a5a3"></div><div class="abs" style="left:469px;top:170px;width:9px;height:6px;background:#a6a8a6"></div><div class="abs" style="left:478px;top:170px;width:9px;height:6px;background:#a2a2a2"></div><div class="abs" style="left:487px;top:170px;width:9px;height:6px;background:#acacaa"></div><div class="abs" style="left:496px;top:170px;width:9px;height:6px;background:#aaaaaa"></div><div class="abs" style="left:505px;top:170px;width:9px;height:6px;background:#a4a4a4"></div><div class="abs" style="left:514px;top:170px;width:9px;height:6px;background:#a2a2a2"></div><div class="abs" style="left:523px;top:170px;width:9px;height:6px;background:#a6a6a6"></div>
<div class="abs" style="left:379px;top:176px;width:9px;height:9px;background:#6e7070"></div><div class="abs" style="left:388px;top:176px;width:9px;height:9px;background:#747272"></div><div class="abs" style="left:397px;top:176px;width:9px;height:9px;background:#767a7c"></div><div class="abs" style="left:406px;top:176px;width:9px;height:9px;background:#7d7b79"></div><div class="abs" style="left:415px;top:176px;width:9px;height:9px;background:#7a7a7a"></div><div class="abs" style="left:424px;top:176px;width:9px;height:9px;background:#84878a"></div><div class="abs" style="left:433px;top:176px;width:9px;height:9px;background:#726e6c"></div><div class="abs" style="left:442px;top:176px;width:9px;height:9px;background:#878a8c"></div><div class="abs" style="left:451px;top:176px;width:9px;height:9px;background:#8b8d8f"></div><div class="abs" style="left:460px;top:176px;width:9px;height:9px;background:#64625f"></div><div class="abs" style="left:469px;top:176px;width:9px;height:9px;background:#74787b"></div><div class="abs" style="left:478px;top:176px;width:9px;height:9px;background:#807e7e"></div><div class="abs" style="left:487px;top:176px;width:9px;height:9px;background:#878989"></div><div class="abs" style="left:496px;top:176px;width:9px;height:9px;background:#7f7d7b"></div><div class="abs" style="left:505px;top:176px;width:9px;height:9px;background:#626262"></div><div class="abs" style="left:514px;top:176px;width:9px;height:9px;background:#7e7e7e"></div><div class="abs" style="left:523px;top:176px;width:9px;height:9px;background:#7a7e80"></div>
<div class="abs" style="left:899px;top:645px;width:41px;height:21px;background:#a3a3a3"></div><div class="abs" style="left:940px;top:645px;width:40px;height:21px;background:#a4a4a4"></div><div class="abs" style="left:980px;top:645px;width:4px;height:21px;background:#bbbbbb"></div><div class="abs" style="left:984px;top:645px;width:40px;height:21px;background:#a3a3a3"></div><div class="abs" style="left:1024px;top:645px;width:38px;height:21px;background:#a8aaa8"></div>
<div class="abs" style="left:1099px;top:644px;width:54px;height:10px;background:#ececec;border-radius:50% 50% 0 0"></div>
<div class="abs" style="left:1100px;top:653px;width:9px;height:9px;background:#8a8684"></div><div class="abs" style="left:1109px;top:653px;width:9px;height:9px;background:#606368"></div><div class="abs" style="left:1118px;top:653px;width:9px;height:9px;background:#5f5d5a"></div><div class="abs" style="left:1127px;top:653px;width:9px;height:9px;background:#6e6c6a"></div><div class="abs" style="left:1136px;top:653px;width:9px;height:9px;background:#525456"></div><div class="abs" style="left:1145px;top:653px;width:9px;height:9px;background:#a0a0a0"></div>
<div class="abs" style="left:1100px;top:662px;width:54px;height:8px;background:#a6a8a8"></div>
<div class="abs" style="left:900px;top:686px;width:25px;height:23px;background:#9b9b9b"></div><div class="abs" style="left:925px;top:686px;width:40px;height:23px;background:#979797"></div><div class="abs" style="left:965px;top:686px;width:1px;height:23px;background:#a8a8a8"></div><div class="abs" style="left:966px;top:686px;width:40px;height:23px;background:#939393"></div><div class="abs" style="left:1006px;top:686px;width:40px;height:23px;background:#9a9a9a"></div><div class="abs" style="left:1046px;top:686px;width:14px;height:23px;background:#969696"></div>
<div class="abs" style="left:1102px;top:686px;width:18px;height:21px;background:#8f8f8d"></div><div class="abs" style="left:1120px;top:686px;width:5px;height:21px;background:#9a9a9a"></div><div class="abs" style="left:1125px;top:686px;width:21px;height:21px;background:#8e8e8c"></div>
<div class="abs" style="left:899px;top:726px;width:31px;height:22px;background:#9c9c9c"></div><div class="abs" style="left:930px;top:726px;width:40px;height:22px;background:#979998"></div><div class="abs" style="left:970px;top:726px;width:2px;height:22px;background:#b0b0b0"></div><div class="abs" style="left:972px;top:726px;width:40px;height:22px;background:#949494"></div><div class="abs" style="left:1012px;top:726px;width:40px;height:22px;background:#9c9c9c"></div><div class="abs" style="left:1052px;top:726px;width:8px;height:22px;background:#979797"></div>
<div class="abs" style="left:1101px;top:727px;width:3px;height:19px;background:#9a9a9c"></div><div class="abs" style="left:1104px;top:727px;width:40px;height:19px;background:#8f8f8f"></div><div class="abs" style="left:1144px;top:727px;width:4px;height:19px;background:#9a9a9c"></div>
<div class="abs" style="left:899px;top:768px;width:31px;height:21px;background:#9a9a9a"></div><div class="abs" style="left:930px;top:768px;width:45px;height:21px;background:#979797"></div><div class="abs" style="left:975px;top:768px;width:3px;height:21px;background:#b0b0b0"></div><div class="abs" style="left:978px;top:768px;width:40px;height:21px;background:#949494"></div><div class="abs" style="left:1018px;top:768px;width:40px;height:21px;background:#9c9c9c"></div><div class="abs" style="left:1058px;top:768px;width:3px;height:21px;background:#999999"></div>
<div class="abs" style="left:1099px;top:769px;width:12px;height:20px;background:#959391"></div><div class="abs" style="left:1111px;top:769px;width:11px;height:20px;background:#949597"></div><div class="abs" style="left:1122px;top:769px;width:27px;height:20px;background:#969492"></div>
<div class="abs" style="left:898px;top:808px;width:32px;height:22px;background:#9b9b9b"></div><div class="abs" style="left:930px;top:808px;width:40px;height:22px;background:#979797"></div><div class="abs" style="left:970px;top:808px;width:2px;height:22px;background:#b0b0b0"></div><div class="abs" style="left:972px;top:808px;width:40px;height:22px;background:#959595"></div><div class="abs" style="left:1012px;top:808px;width:40px;height:22px;background:#9c9c9c"></div><div class="abs" style="left:1052px;top:808px;width:7px;height:22px;background:#999999"></div>
<div class="abs" style="left:1100px;top:809px;width:4px;height:20px;background:#979a9c"></div><div class="abs" style="left:1104px;top:809px;width:40px;height:20px;background:#929292"></div><div class="abs" style="left:1144px;top:809px;width:3px;height:20px;background:#979a9c"></div>
<div class="abs" style="left:897px;top:848px;width:33px;height:18px;background:#adadad"></div><div class="abs" style="left:930px;top:848px;width:40px;height:18px;background:#aaaaaa"></div><div class="abs" style="left:970px;top:848px;width:2px;height:18px;background:#c0c0c0"></div><div class="abs" style="left:972px;top:848px;width:40px;height:18px;background:#abaaa7"></div><div class="abs" style="left:1012px;top:848px;width:40px;height:18px;background:#adaeac"></div><div class="abs" style="left:1052px;top:848px;width:6px;height:18px;background:#aaaaaa"></div>
<div class="abs" style="left:1101px;top:849px;width:19px;height:16px;background:#a3a3a3"></div><div class="abs" style="left:1120px;top:849px;width:14px;height:16px;background:#abacae"></div><div class="abs" style="left:1134px;top:849px;width:20px;height:16px;background:#a5a5a5"></div>
<div class="abs" style="left:1881px;top:768px;width:34px;height:94px;border-radius:17px;background:#fff;border:1px solid rgba(51,112,255,0.3);box-shadow:0 2px 2px rgba(51,112,255,0.5)"></div>
<svg class="abs" style="left:1885px;top:770px" width="26" height="26" viewBox="0 0 26 26">
 <path d="M12.7 24.2 H6.5 V18.2 L3.2 16.6 Q2.4 16.1 2.9 15.4 L6 11 Q6.5 3.4 14.7 3.4 Q24.3 3.4 24.3 12.4 Q24.3 16.5 21.4 20.1 V24.7" fill="none" stroke="#4a80ff" stroke-width="1.5" stroke-linejoin="round"/>
 <path d="M10.1 18.6 L13 9.6 L15.9 18.6 M11.1 15.6 H14.9" fill="none" stroke="#4a80ff" stroke-width="1.8"/>
 <path d="M18.4 9.2 V18.6" fill="none" stroke="#4a80ff" stroke-width="1.8"/>
</svg>
<div class="t" style="left:1881px;top:801px;width:34px;text-align:center;font-size:14px;color:#222;line-height:16px">AI</div>
<div class="t" style="left:1881px;top:820px;width:34px;text-align:center;font-size:14px;color:#222;line-height:16px">助</div>
<div class="t" style="left:1881px;top:839px;width:34px;text-align:center;font-size:14px;color:#222;line-height:16px">手</div>
<div class="abs" style="left:17px;top:225px;width:157px;height:37px;border:4px solid #f24b4b;border-radius:3px;z-index:10"></div>
<div class="abs" style="left:245px;top:304px;width:128px;height:39px;border:4px solid #f24f4f;border-radius:3px"></div>
<svg class="abs" style="left:0;top:0" width="700" height="320" viewBox="0 0 700 320">
  <path d="M384 295.8 L644 274.9 L642 268.8 L669.5 277 L644 288.9 L644 282.9 L384 297.6 Z" fill="#f44f4f"/>
</svg>
</body></html>
